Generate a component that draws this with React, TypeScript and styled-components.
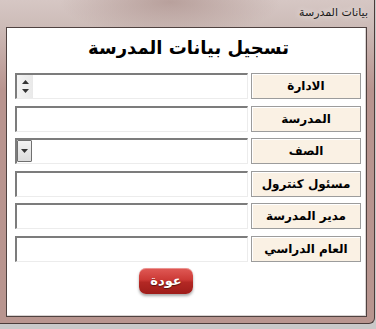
import styled, { createGlobalStyle } from "styled-components";

const GlobalStyle = createGlobalStyle`
  html, body {
    margin: 0;
    padding: 0;
    background: #c9c9c9;
  }
  body {
    font-family: "DejaVu Sans", Tahoma, sans-serif;
  }
`;

const Window = styled.div`
  width: 375px;
  height: 324px;
  box-sizing: border-box;
  display: flex;
  flex-direction: column;
  border-right: 1px solid #4a3c3a;
  border-bottom: 1px solid #4a3c3a;
  border-bottom-right-radius: 6px;
  background:
    radial-gradient(ellipse 110px 34px at 170px 2px, rgba(165, 135, 130, 0.6), rgba(165, 135, 130, 0) 100%),
    linear-gradient(to bottom, #d6c7c4 0px, #cdbcb8 26px, #b8948f 90px, #b8958f 100%);
`;

const TitleBar = styled.div`
  height: 27px;
  display: flex;
  align-items: flex-start;
  justify-content: flex-end;
  padding: 6px 6px 0 0;
  box-sizing: border-box;
`;

const TitleText = styled.span`
  font-size: 11px;
  color: #1a1a1a;
  direction: rtl;
  text-shadow: 0 0 6px rgba(255, 255, 255, 0.9);
`;

const Client = styled.div`
  margin: 0 7px 0 6px;
  height: 290px;
  box-sizing: border-box;
  background: #fff;
  border: 1px solid #4f4240;
  box-shadow: inset -1px -1px 0 #d9d3d2;
  direction: rtl;
  display: flex;
  flex-direction: column;
  align-items: stretch;
  padding: 4px 5px 0 9px;
`;

const FormTitle = styled.h1`
  margin: 0;
  height: 41px;
  text-align: center;
  font-size: 18px;
  font-weight: bold;
  line-height: 32px;
  color: #000;
`;

const Rows = styled.div`
  display: flex;
  flex-direction: column;
  gap: 6.6px;
`;

const Row = styled.div`
  display: grid;
  grid-template-columns: 110px 233px;
  column-gap: 3px;
  height: 26px;
`;

const Label = styled.div`
  box-sizing: border-box;
  background: #faf1e4;
  border: 1px solid #9c9c9c;
  box-shadow: inset 1px 1px 0 #fff;
  display: flex;
  align-items: center;
  justify-content: center;
  font-size: 12px;
  font-weight: bold;
  color: #000;
`;

const Field = styled.div`
  box-sizing: border-box;
  background: #fff;
  border-top: 2px solid #7c7c7c;
  border-right: 1px solid #ececec;
  border-left: 2px solid #7c7c7c;
  border-bottom: 1px solid #ececec;
  display: flex;
  direction: ltr;
  align-items: stretch;
`;

const Spinner = styled.div`
  width: 16px;
  display: flex;
  flex-direction: column;
  justify-content: space-around;
  align-items: center;
  background: linear-gradient(to right, #f4f4f4, #e9e9e9);
  padding: 2px 0;
`;

const DropButton = styled.div`
  width: 15px;
  margin: 0 0 1px 0;
  box-sizing: border-box;
  border: 1px solid #707070;
  border-radius: 1px;
  background: linear-gradient(to bottom, #f2f2f2, #dcdcdc);
  display: flex;
  align-items: center;
  justify-content: center;
`;

const Footer = styled.div`
  display: flex;
  justify-content: center;
  padding-top: 6px;
  padding-right: 45px;
`;

const BackButton = styled.button`
  width: 54px;
  height: 26px;
  border: none;
  border-radius: 7px;
  background: linear-gradient(to bottom, #e05a56 0%, #cc3a36 45%, #b32824 55%, #9e1d1a 100%);
  box-shadow: 0 2px 3px rgba(0, 0, 0, 0.35), inset 0 1px 0 rgba(255, 255, 255, 0.35);
  color: #fff;
  font-family: "DejaVu Sans", Tahoma, sans-serif;
  font-size: 13px;
  font-weight: bold;
  text-shadow: 0 1px 1px rgba(0, 0, 0, 0.5);
  padding: 0;
  cursor: pointer;
`;

const Arrow = ({ dir }: { dir: "up" | "down" }) => (
  <svg width="7" height="4" viewBox="0 0 7 4">
    {dir === "up" ? (
      <polygon points="0,4 7,4 3.5,0" fill="#333" />
    ) : (
      <polygon points="0,0 7,0 3.5,4" fill="#333" />
    )}
  </svg>
);

type Kind = "text" | "spin" | "combo";

const fields: { label: string; kind: Kind }[] = [
  { label: "الادارة", kind: "spin" },
  { label: "المدرسة", kind: "text" },
  { label: "الصف", kind: "combo" },
  { label: "مسئول كنترول", kind: "text" },
  { label: "مدير المدرسة", kind: "text" },
  { label: "العام الدراسي", kind: "text" },
];

function App() {
  return (
    <>
      <GlobalStyle />
      <Window>
        <TitleBar>
          <TitleText>بيانات المدرسة</TitleText>
        </TitleBar>
        <Client>
          <FormTitle>تسجيل بيانات المدرسة</FormTitle>
          <Rows>
            {fields.map((f) => (
              <Row key={f.label}>
                <Label>{f.label}</Label>
                <Field>
                  {f.kind === "spin" && (
                    <Spinner>
                      <Arrow dir="up" />
                      <Arrow dir="down" />
                    </Spinner>
                  )}
                  {f.kind === "combo" && (
                    <DropButton>
                      <Arrow dir="down" />
                    </DropButton>
                  )}
                </Field>
              </Row>
            ))}
          </Rows>
          <Footer>
            <BackButton>عودة</BackButton>
          </Footer>
        </Client>
      </Window>
    </>
  );
}

export default App;
